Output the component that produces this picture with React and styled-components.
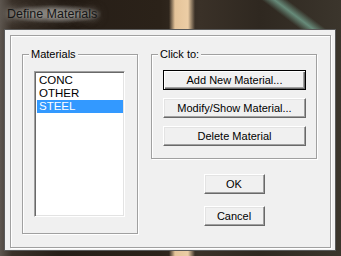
import React from 'react';
import styled, { createGlobalStyle } from 'styled-components';

const Global = createGlobalStyle`
  html, body {
    margin: 0;
    padding: 0;
    background: #2a231c;
  }
  * { box-sizing: border-box; }
`;

const Window = styled.div`
  width: 341px;
  height: 256px;
  display: flex;
  flex-direction: column;
  font-family: 'Liberation Sans', Arial, sans-serif;
  background:
    linear-gradient(to right, transparent 169px, rgba(238, 204, 160, 0.95) 175px, rgba(246, 214, 172, 0.95) 188px, transparent 195px),
    linear-gradient(to right, #5d564f 0px, #3a3129 12px, #261e17 60px, #2b2219 160px, #3a3128 200px, #2f2820 260px, #3b352c 341px);
`;

const TitleBar = styled.div`
  height: 29px;
  display: flex;
  align-items: center;
  padding: 0 0 2px 7px;
  background: linear-gradient(37deg, transparent 79%, rgba(120, 170, 150, 0.75) 82.5%, transparent 86%);
`;

const Title = styled.span`
  font-size: 12.5px;
  color: #151515;
  padding: 2px 4px 2px 0;
  border-radius: 10px;
  background: radial-gradient(ellipse at center, rgba(170, 168, 164, 0.55) 30%, rgba(150, 148, 144, 0) 75%);
  text-shadow: 0 0 6px rgba(225, 225, 220, 0.8), 0 0 12px rgba(205, 205, 200, 0.6);
`;

const Client = styled.div`
  flex: 1;
  margin: 0 5px 5px 4px;
  border: 1px solid #5a5a5a;
  background: #f0f0f0;
  padding: 5px 4px 2px 5px;
  display: flex;
`;

const Frame = styled.div`
  flex: 1;
  border: 1px solid #a0a0a0;
  box-shadow: inset 1px 1px 0 #fff, 1px 1px 0 #fff;
  padding: 12px 0 0 11px;
  display: flex;
  gap: 13px;
  align-items: flex-start;
`;

const Group = styled.fieldset`
  margin: 0;
  padding: 0;
  min-width: 0;
  width: ${p => p.$w}px;
  height: ${p => p.$h}px;
  border: 1px solid #a0a0a0;
  box-shadow: inset 1px 1px 0 #fff, 1px 1px 0 #fff;
`;

const Legend = styled.legend`
  margin-left: 6px;
  padding: 0 2px;
  font-size: 11px;
  line-height: 13px;
  color: #000;
  background: #f0f0f0;
`;

const GroupBody = styled.div`
  display: flex;
  flex-direction: column;
  gap: ${p => p.$gap || 0}px;
  padding: ${p => p.$pad};
`;

const ListBox = styled.div`
  width: 91px;
  height: 146px;
  background: #fff;
  border: 1px solid;
  border-color: #a0a0a0 #fff #fff #a0a0a0;
  box-shadow: inset 1px 1px 0 #696969, inset -1px -1px 0 #e3e3e3;
  padding: 2px 1px 1px 2px;
`;

const Item = styled.div`
  height: 13px;
  line-height: 13px;
  padding-left: 2px;
  font-size: 11.5px;
  color: ${p => (p.$selected ? '#fff' : '#000')};
  background: ${p => (p.$selected ? '#3399ff' : 'transparent')};
`;

const RightColumn = styled.div`
  width: 166px;
  display: flex;
  flex-direction: column;
  align-items: center;
`;

const Button = styled.button`
  width: ${p => p.$w}px;
  height: 20px;
  margin: 0;
  padding: 0;
  font-family: 'Liberation Sans', Arial, sans-serif;
  font-size: 11px;
  color: #000;
  background: #f0f0f0;
  border: 1px solid;
  border-color: ${p => (p.$default ? '#000' : '#fff #696969 #696969 #fff')};
  box-shadow: ${p =>
    p.$default
      ? 'inset 1px 1px 0 #fff, inset -1px -1px 0 #696969, inset -2px -2px 0 #a0a0a0'
      : 'inset -1px -1px 0 #a0a0a0, inset 1px 1px 0 #e3e3e3'};
`;

const DialogButtons = styled.div`
  display: flex;
  flex-direction: column;
  gap: 12px;
  margin-top: 15px;
`;

const materials = ['CONC', 'OTHER', 'STEEL'];

export default function App() {
  return (
    <>
      <Global />
      <Window>
        <TitleBar>
          <Title>Define Materials</Title>
        </TitleBar>
        <Client>
          <Frame>
            <Group $w={116} $h={186}>
              <Legend>Materials</Legend>
              <GroupBody $pad="10px 0 0 11px">
                <ListBox>
                  {materials.map(m => (
                    <Item key={m} $selected={m === 'STEEL'}>{m}</Item>
                  ))}
                </ListBox>
              </GroupBody>
            </Group>
            <RightColumn>
              <Group $w={166} $h={111}>
                <Legend>Click to:</Legend>
                <GroupBody $pad="9px 0 0 11px" $gap={8}>
                  <Button $w={143} $default>Add New Material...</Button>
                  <Button $w={143}>Modify/Show Material...</Button>
                  <Button $w={143}>Delete Material</Button>
                </GroupBody>
              </Group>
              <DialogButtons>
                <Button $w={61}>OK</Button>
                <Button $w={61}>Cancel</Button>
              </DialogButtons>
            </RightColumn>
          </Frame>
        </Client>
      </Window>
    </>
  );
}
